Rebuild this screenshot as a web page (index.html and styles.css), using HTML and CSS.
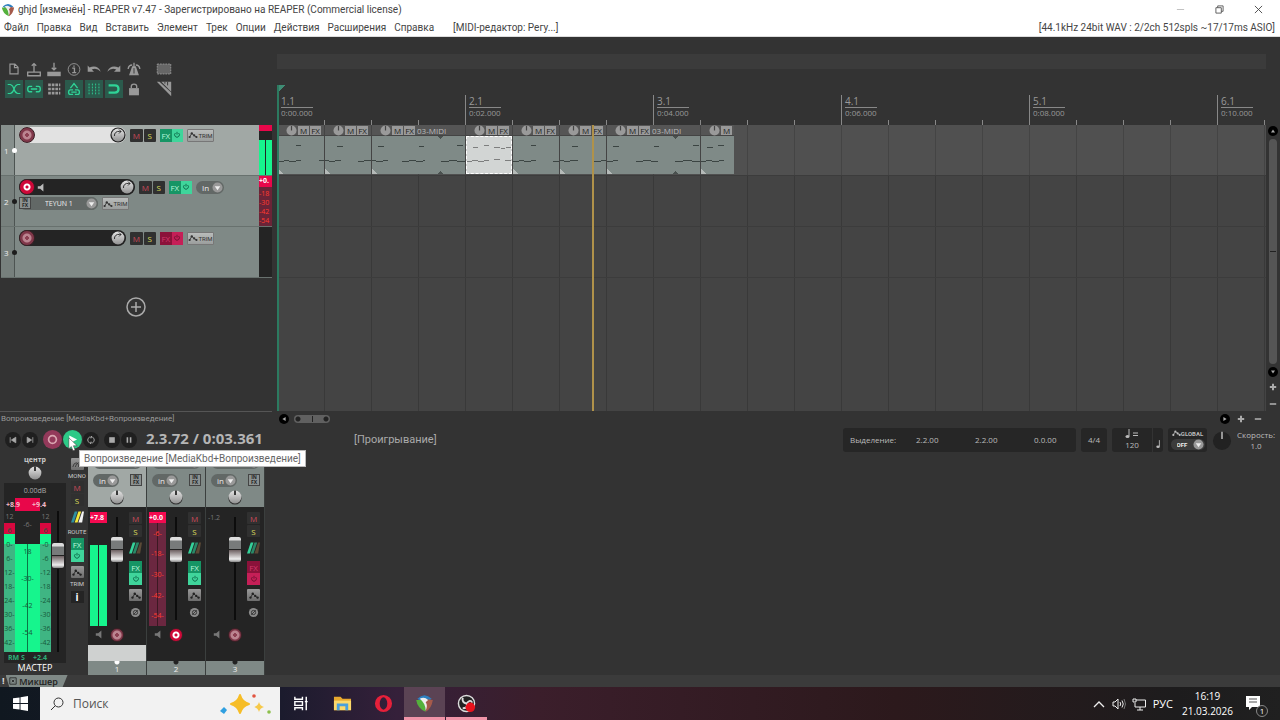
FILE: index.html
```
<!DOCTYPE html>
<html lang="ru">
<head>
  <meta charset="UTF-8">
  <meta name="viewport" content="width=device-width, initial-scale=1.0">
  <title>ghjd [изменён] - REAPER v7.47</title>
  <link rel="stylesheet" href="styles.css">
</head>
<body>
  <!-- Общие иконки -->
  <svg class="defs" aria-hidden="true">
    <symbol id="reaper" viewBox="0 0 16 16">
      <path d="M2 4 Q8 -2 14 4 L11 6 Q8 3 5 6Z" fill="#2d7fc0"/>
      <path d="M1 5 L6 5 Q9 8 9 15 Q2 12 1 5Z" fill="#54b13c"/>
      <path d="M7 4 L15 5 Q14 12 9 15 Q10 9 7 4Z" fill="#a55a4b"/>
      <path d="M4 4 Q8 2 11 5 L9 7 Q11 10 9 14 Q9 8 4 4Z" fill="#eee"/>
    </symbol>
    <symbol id="knob" viewBox="0 0 16 16">
      <circle cx="8" cy="8" r="7.6" fill="#222"/>
      <circle cx="8" cy="8" r="6.4" fill="url(#metal)"/>
      <path d="M4.500 9 A4 4 0 0 1 9.500 4.500 L11 4.500 M9 2.500L11 4.500L9 6.500" fill="none" stroke="#333"/>
    </symbol>
    <symbol id="pan" viewBox="0 0 16 16">
      <circle cx="8" cy="9" r="6.6" fill="#333"/>
      <circle cx="8" cy="8" r="6.4" fill="url(#metal)"/>
      <path d="M8 1.5V6" stroke="#111" stroke-width="1.6"/>
    </symbol>
    <linearGradient id="metal" x1="0" y1="0" x2="0" y2="1">
      <stop offset="0" stop-color="#e4e4e4"/><stop offset="1" stop-color="#929292"/>
    </linearGradient>
    <symbol id="power" viewBox="0 0 10 10">
      <path d="M3 2.5 A3 3 0 1 0 7 2.5 M5 1V4.5" fill="none" stroke="currentColor" stroke-width="1.2"/>
    </symbol>
    <symbol id="env" viewBox="0 0 12 10">
      <path d="M1.500 8 L4.500 3 L7.500 5.500 L10.500 8" fill="none" stroke="currentColor"/>
      <circle cx="1.800" cy="7.500" r="1.400" fill="currentColor"/><circle cx="4.500" cy="3" r="1.500" fill="currentColor"/>
      <circle cx="7.500" cy="5.500" r="1.400" fill="currentColor"/><circle cx="10.300" cy="7.500" r="1.400" fill="currentColor"/>
    </symbol>
    <symbol id="speaker" viewBox="0 0 10 10">
      <path d="M1 3.500H4L8 0V10L4 6.500H1Z" fill="currentColor"/>
    </symbol>
    <symbol id="route" viewBox="0 0 14 14">
      <path d="M4 1H7L3 13H0Z" fill="var(--a)"/><path d="M8 1H11L7 13H4Z" fill="var(--b)"/><path d="M12 1H14L12 13H8Z" fill="var(--c)"/>
    </symbol>
    <symbol id="phase" viewBox="0 0 12 12">
      <circle cx="6" cy="6" r="5" fill="#8c8c8c"/><circle cx="6" cy="6" r="2.300" fill="none" stroke="#333"/><path d="M3.500 8.500L8.500 3.500" stroke="#333"/>
    </symbol>
    <symbol id="take" viewBox="0 0 12 12">
      <circle cx="6" cy="6" r="5.500" fill="#9a9a9a"/><path d="M6 1V6" stroke="#444" stroke-width="1.300"/>
    </symbol>
  </svg>

  <header class="titlebar">
    <svg class="logo"><use href="#reaper"/></svg>
    <h1>ghjd [изменён] - REAPER v7.47 - Зарегистрировано на REAPER (Commercial license)</h1>
    <div class="win-buttons">
      <button aria-label="Свернуть"><svg viewBox="0 0 10 10"><path d="M1 5H9" stroke="#bbb"/></svg></button>
      <button aria-label="Окно"><svg viewBox="0 0 10 10"><path d="M1 3H7V9H1Z M3 3V1H9V7H7" fill="none" stroke="#555"/></svg></button>
      <button aria-label="Закрыть"><svg viewBox="0 0 10 10"><path d="M1 1L9 9M9 1L1 9" stroke="#444"/></svg></button>
    </div>
  </header>

  <nav class="menubar">
    <a href="#">Файл</a><a href="#">Правка</a><a href="#">Вид</a><a href="#">Вставить</a><a href="#">Элемент</a><a href="#">Трек</a><a href="#">Опции</a><a href="#">Действия</a><a href="#">Расширения</a><a href="#">Справка</a>
    <a href="#" class="editor-link">[MIDI-редактор: Регу...]</a>
    <span class="audio-info">[44.1kHz 24bit WAV : 2/2ch 512spls ~17/17ms ASIO]</span>
  </nav>

  <main class="workspace">
    <section class="side">
      <div class="toolbar">
        <button aria-label="Новый проект"><svg viewBox="0 0 20 20"><path d="M5.500 4.500H11L14.500 8V15.500H5.500Z M10.500 4.500V8.500H14.500" fill="none" stroke="currentColor" stroke-width="1.300"/></svg></button>
        <button aria-label="Открыть"><svg viewBox="0 0 20 20"><path d="M3 13.500H17V17.500H3Z M10 13V4M7.500 6.500L10 4L12.500 6.500" fill="none" stroke="currentColor" stroke-width="1.500"/></svg></button>
        <button aria-label="Сохранить"><svg viewBox="0 0 20 20"><path d="M2.500 13H17.500V18H2.500Z" fill="currentColor"/><path d="M10 3V11M7.500 8.500L10 11L12.500 8.500" fill="none" stroke="currentColor" stroke-width="1.500"/></svg></button>
        <button aria-label="Сведения"><svg viewBox="0 0 20 20"><circle cx="10" cy="10.500" r="6.500" fill="none" stroke="currentColor"/><path d="M8 9H10.500V14M8 14H12.500M10 6V7.500" fill="none" stroke="currentColor" stroke-width="1.500"/></svg></button>
        <button aria-label="Отменить"><svg viewBox="0 0 20 20"><path d="M3 6V13H10L7.500 10.500Q13 8 17.500 13Q14 5 5 8.300Z" fill="currentColor"/></svg></button>
        <button aria-label="Повторить"><svg viewBox="0 0 20 20"><path d="M17 6V13H10L12.500 10.500Q7 8 2.500 13Q6 5 15 8.300Z" fill="currentColor"/></svg></button>
        <button aria-label="Метроном"><svg viewBox="0 0 20 20"><path d="M8 7H12L15.500 17H4.500Z" fill="currentColor"/><path d="M10 3V14M3.500 10Q4 5.500 8 5.500M16.500 10Q16 5.500 12 5.500" fill="none" stroke="currentColor" stroke-width="1.500"/><path d="M10 9V15" stroke="#333"/></svg></button>
        <button class="apart" aria-label="Выделение"><svg viewBox="0 0 20 20"><path d="M2.500 4.500H17.500V15.500H2.500Z" fill="#666" stroke="currentColor" stroke-dasharray="2 1"/></svg></button>
        <button class="on" aria-label="Кроссфейд"><svg viewBox="0 0 20 20"><path d="M3 5H6Q9 6 10 10T14 15H17M17 5H14Q11 6 10 10T6 15H3" fill="none" stroke="currentColor" stroke-width="1.300"/></svg></button>
        <button class="on" aria-label="Группы"><svg viewBox="0 0 20 20"><path d="M8 7H5Q3 7 3 10T5 13H8M12 7H15Q17 7 17 10T15 13H12M6.500 10H13.500" fill="none" stroke="currentColor" stroke-width="1.500"/></svg></button>
        <button aria-label="Пульсация"><svg viewBox="0 0 20 20"><path d="M3.500 5.500H17M3.500 10H17M3.500 14.500H17" stroke="currentColor" stroke-width="3" stroke-dasharray="3 1"/></svg></button>
        <button class="on" aria-label="Огибающие"><svg viewBox="0 0 20 20"><path d="M6 9L10 4L14 9M9 11H6Q4 11 4 13.500T6 16H9M11 11H14Q16 11 16 13.500T14 16H11M7 13.500H13" fill="none" stroke="currentColor" stroke-width="1.500"/></svg></button>
        <button class="on" aria-label="Сетка"><svg viewBox="0 0 20 20"><path d="M4.500 4V16M8.200 4V16M11.800 4V16M15.500 4V16" stroke="currentColor" stroke-dasharray="2 1.300"/></svg></button>
        <button class="on" aria-label="Привязка"><svg viewBox="0 0 20 20"><path d="M4 6H11Q15 6 15 10T11 14H4" fill="none" stroke="currentColor" stroke-width="2.500"/></svg></button>
        <button aria-label="Блокировка"><svg viewBox="0 0 20 20"><path d="M4.500 9H15.500V17H4.500Z" fill="currentColor"/><path d="M7 9V7Q7 4.500 10 4.500T13 7V9" fill="none" stroke="currentColor" stroke-width="1.500"/></svg></button>
        <button class="apart" aria-label="Линейка"><svg viewBox="0 0 20 20"><path d="M7 2H18V13Z" fill="currentColor"/><path d="M11 2V4M14 2V6" stroke="#333"/><path d="M2 2H5L18 14V18Z" fill="currentColor"/></svg></button>
      </div>

      <div class="tracks">
        <article class="track selected">
          <div class="track-no">1</div>
          <div class="track-body">
            <div class="track-row">
              <div class="name-bar">
                <button class="rec" aria-label="Запись 1"></button>
                <input type="text" aria-label="Имя трека 1">
                <button class="dial" aria-label="Панорама 1"><svg><use href="#knob"/></svg></button>
              </div>
              <div class="pair"><button class="mute">M</button><button class="solo">S</button></div>
              <div class="pair fx"><button>FX</button><button aria-label="FX вкл"><svg><use href="#power"/></svg></button></div>
              <button class="trim"><svg><use href="#env"/></svg>TRIM</button>
            </div>
          </div>
          <div class="track-meter"><b></b><i></i><i></i></div>
        </article>
        <article class="track">
          <div class="track-no">2</div>
          <div class="track-body">
            <div class="track-row">
              <div class="name-bar wide">
                <button class="rec armed" aria-label="Запись 2"></button>
                <svg class="speaker"><use href="#speaker"/></svg>
                <input type="text" aria-label="Имя трека 2">
                <button class="dial" aria-label="Панорама 2"><svg><use href="#knob"/></svg></button>
              </div>
              <div class="pair"><button class="mute">M</button><button class="solo">S</button></div>
              <div class="pair fx"><button>FX</button><button aria-label="FX вкл"><svg><use href="#power"/></svg></button></div>
              <select class="pick" aria-label="Вход 2"><option>In</option></select>
            </div>
            <div class="track-row second">
              <div class="input-row"><button class="infx">IN<br>FX</button><select class="pick device" aria-label="Устройство"><option>TEYUN 1</option></select></div>
              <button class="trim"><svg><use href="#env"/></svg>TRIM</button>
            </div>
          </div>
          <div class="track-meter hot"><b>+0.</b><span>-18</span><span>-30</span><span>-42</span><span>-54</span></div>
        </article>
        <article class="track">
          <div class="track-no">3</div>
          <div class="track-body">
            <div class="track-row">
              <div class="name-bar">
                <button class="rec" aria-label="Запись 3"></button>
                <input type="text" aria-label="Имя трека 3">
                <button class="dial" aria-label="Панорама 3"><svg><use href="#knob"/></svg></button>
              </div>
              <div class="pair"><button class="mute">M</button><button class="solo">S</button></div>
              <div class="pair fx off"><button>FX</button><button aria-label="FX выкл"><svg><use href="#power"/></svg></button></div>
              <button class="trim"><svg><use href="#env"/></svg>TRIM</button>
            </div>
          </div>
          <div class="track-meter"></div>
        </article>
      </div>
      <button class="add-track" aria-label="Добавить трек"><svg viewBox="0 0 20 20"><circle cx="10" cy="10" r="9" fill="none" stroke="#aaa" stroke-width="1.500"/><path d="M10 5V15M5 10H15" stroke="#aaa" stroke-width="1.500"/></svg></button>
    </section>

    <section class="timeline">
      <div class="region-band"></div>
      <div class="ruler">
        <div class="measure"><b>1.1</b><span>0:00.000</span></div>
        <div class="measure"><b>2.1</b><span>0:02.000</span></div>
        <div class="measure"><b>3.1</b><span>0:04.000</span></div>
        <div class="measure"><b>4.1</b><span>0:06.000</span></div>
        <div class="measure"><b>5.1</b><span>0:08.000</span></div>
        <div class="measure"><b>6.1</b><span>0:10.000</span></div>
      </div>
      <div class="arrange">
        <div class="lane first">
          <div class="clip"><div class="clip-head"><svg><use href="#take"/></svg><button>M</button><button>FX</button></div>
            <svg class="notes" viewBox="0 0 47 38"><path d="M0 26H4L6 25H11L13 26H17L19 25H23M42 25H47M18 9H24"/></svg></div>
          <div class="clip"><div class="clip-head"><svg><use href="#take"/></svg><button>M</button><button>FX</button></div>
            <svg class="notes" viewBox="0 0 47 38"><path d="M0 25H4L6 26H9L11 25H16M34 26H38L40 25H47M12 10H18"/></svg></div>
          <div class="clip double"><div class="clip-head"><svg><use href="#take"/></svg><button>M</button><button>FX</button><span>03-MIDI</span></div>
            <svg class="notes" viewBox="0 0 94 38"><path d="M0 25H4L6 26H9L11 25H16M30 26H36L38 25H44L46 26H50L52 25H54M70 26H76L78 25H86L88 26H94M6 10H12M47 10H53M86 9H92"/><path class="split" d="M66 0H72L69 3ZM66 38H72L69 35Z"/></svg></div>
          <div class="clip picked"><div class="clip-head"><svg><use href="#take"/></svg><button>M</button><button>FX</button></div>
            <svg class="notes" viewBox="0 0 47 38"><path d="M0 26H4L6 25H11L13 26H17L19 25H23M29 24H35M41 25H47M6 11H12M18 9H24M29 11H35L36 12H41M42 11H47"/></svg></div>
          <div class="clip"><div class="clip-head"><svg><use href="#take"/></svg><button>M</button><button>FX</button></div>
            <svg class="notes" viewBox="0 0 47 38"><path d="M0 26H4L6 25H11L13 26H17L19 25H23M41 26H47M18 9H24"/></svg></div>
          <div class="clip"><div class="clip-head"><svg><use href="#take"/></svg><button>M</button><button>FX</button></div>
            <svg class="notes" viewBox="0 0 47 38"><path d="M0 25H4L6 26H9L11 25H18M35 26H40L42 25H47M12 10H18"/></svg></div>
          <div class="clip double"><div class="clip-head"><svg><use href="#take"/></svg><button>M</button><button>FX</button><span>03-MIDI</span></div>
            <svg class="notes" viewBox="0 0 94 38"><path d="M0 26H4L6 25H11M29 26H35L37 25H44L46 26H52M69 26H75L77 25H86L88 26H94M6 10H12M47 10H53M87 9H93"/><path class="split" d="M66 0H72L69 3ZM66 38H72L69 35Z"/></svg></div>
          <div class="clip last"><div class="clip-head"><svg><use href="#take"/></svg><button>M</button></div>
            <svg class="notes" viewBox="0 0 34 38"><path d="M0 26H4L6 25H11L13 26H17L19 25H24M6 11H12M18 9H24"/></svg></div>
        </div>
        <div class="lane"></div>
        <div class="lane"></div>
        <div class="play-cursor"></div>
      </div>
      <div class="edit-cursor"></div>
    </section>

    <div class="vscroll">
      <button class="round" aria-label="Вверх"><svg viewBox="0 0 10 10"><path d="M5 3L7.500 7H2.500Z" fill="#aaa"/></svg></button>
      <div class="vthumb"></div>
      <button class="round" aria-label="Вниз"><svg viewBox="0 0 10 10"><path d="M5 7L7.500 3H2.500Z" fill="#aaa"/></svg></button>
      <button class="zoom" aria-label="Увеличить по вертикали"><svg viewBox="0 0 10 10"><path d="M5 1V9M1 5H9" stroke="#aaa" stroke-width="2.500"/></svg></button>
      <button class="zoom" aria-label="Уменьшить по вертикали"><svg viewBox="0 0 10 10"><path d="M1 5H9" stroke="#aaa" stroke-width="2"/></svg></button>
    </div>
  </main>

  <div class="status-row">
    <p class="status">Вопроизведение [MediaKbd+Вопроизведение]</p>
    <div class="hscroll">
      <button class="round" aria-label="Влево"><svg viewBox="0 0 10 10"><path d="M3 5L7 2.500V7.500Z" fill="#aaa"/></svg></button>
      <div class="hthumb"></div>
      <button class="round push" aria-label="Вправо"><svg viewBox="0 0 10 10"><path d="M7 5L3 2.500V7.500Z" fill="#aaa"/></svg></button>
      <button class="zoom" aria-label="Увеличить"><svg viewBox="0 0 10 10"><path d="M5 1V9M1 5H9" stroke="#aaa" stroke-width="2.500"/></svg></button>
      <button class="zoom" aria-label="Уменьшить"><svg viewBox="0 0 10 10"><path d="M1 5H9" stroke="#aaa" stroke-width="2"/></svg></button>
    </div>
  </div>

  <section class="transport">
    <div class="play-buttons">
      <button aria-label="В начало"><svg viewBox="0 0 10 10"><path d="M1.500 1.500V8.500M8.500 1.500V8.500L3 5Z" fill="#aaa" stroke="#aaa"/></svg></button>
      <button aria-label="В конец"><svg viewBox="0 0 10 10"><path d="M8.500 1.500V8.500M1.500 1.500V8.500L7 5Z" fill="#aaa" stroke="#aaa"/></svg></button>
      <button class="big record" aria-label="Запись"><svg viewBox="0 0 10 10"><circle cx="5" cy="5" r="3" fill="none" stroke="#d9a5b0" stroke-width="1.300"/></svg></button>
      <button class="big play" aria-label="Воспроизведение"><svg viewBox="0 0 10 10"><path d="M2.500 2L8.500 5L2.500 8Z" fill="#fff"/></svg></button>
      <button aria-label="Повтор"><svg viewBox="0 0 10 10"><path d="M3 8.500A4 4 0 0 1 3 1.500H6M7 1.500A4 4 0 0 1 7 8.500H4M5 0L6.500 1.500L5 3M5 7L3.500 8.500L5 10" fill="none" stroke="#aaa" stroke-width="1.200"/></svg></button>
      <button class="stop" aria-label="Стоп"><svg viewBox="0 0 10 10"><path d="M1.500 1.500H8.500V8.500H1.500Z" fill="#aaa"/></svg></button>
      <button aria-label="Пауза"><svg viewBox="0 0 10 10"><path d="M3 1.500V8.500M7 1.500V8.500" stroke="#aaa" stroke-width="2"/></svg></button>
    </div>
    <output class="time">2.3.72 / 0:03.361</output>
    <span class="state">[Проигрывание]</span>
    <div class="fields">
      <div class="box selection"><span>Выделение:</span><span>2.2.00</span><span>2.2.00</span><span>0.0.00</span></div>
      <button class="box signature">4/4</button>
      <div class="box tempo"><span><svg viewBox="0 0 16 10"><path d="M5 0V7" stroke="#bbb"/><ellipse cx="3.500" cy="7.500" rx="2" ry="1.500" fill="#bbb"/><path d="M9 4H14M9 6.500H14" stroke="#bbb"/></svg>120</span><i><svg viewBox="0 0 8 10"><path d="M5 0V7" stroke="#bbb"/><ellipse cx="3.500" cy="7.500" rx="2" ry="1.500" fill="#bbb"/></svg></i></div>
      <div class="box global"><span><svg><use href="#env"/></svg>GLOBAL</span><select class="pick" aria-label="Автоматизация"><option>OFF</option></select></div>
      <button class="rate" aria-label="Регулятор скорости"><svg viewBox="0 0 22 22"><circle cx="11" cy="12" r="10" fill="#222"/><path d="M11 2V10" stroke="#ccc" stroke-width="1.500"/></svg></button>
      <div class="speed">Скорость:<br>1.0</div>
    </div>
    <div class="tooltip" role="tooltip">Вопроизведение [MediaKbd+Вопроизведение]</div>
    <svg class="pointer" viewBox="0 0 12 18"><path d="M1 1V14L4 11.500L6 16.500L8.500 15.500L6.500 10.500H11Z" fill="#fff" stroke="#333" stroke-width=".600"/></svg>
  </section>

  <section class="mixer">
    <div class="master">
      <span class="center-label">центр</span>
      <button class="dial" aria-label="Панорама мастера"><svg><use href="#pan"/></svg></button>
      <div class="master-panel">
        <div class="db">0.00dB</div>
        <div class="peaks"><b>+8.9</b><b>+9.4</b></div>
        <div class="master-main">
          <div class="scale"><span>12</span><span>6</span><span>0-</span><span>6-</span><span>12-</span><span>18-</span><span>24-</span><span>30-</span><span>36-</span><span>42-</span></div>
          <div class="inner"><span>-6-</span><span>18</span><span>-30-</span><span>-42</span><span>-54</span></div>
          <div class="scale"><span>12</span><span>6</span><span>-0</span><span>-6</span><span>-12</span><span>-18</span><span>-24</span><span>-30</span><span>-36</span><span>-42</span></div>
          <input type="range" class="fader tall" value="73" aria-label="Громкость мастера">
        </div>
        <div class="rms"><span>RM S</span><span>+2.4</span></div>
      </div>
      <div class="master-name">МАСТЕР</div>
    </div>

    <div class="master-side">
      <button class="gray" aria-label="Моно"><svg viewBox="0 0 12 10"><path d="M1 8Q2 3 5 3T8 8M4 8Q5 3 8 3T11 8" fill="none" stroke="#333"/></svg></button><small>MONO</small>
      <button class="mute">M</button><button class="solo">S</button>
      <button class="route colored" aria-label="Маршруты"><svg><use href="#route"/></svg></button><small>ROUTE</small>
      <div class="stack fx"><button>FX</button><button aria-label="FX мастера"><svg><use href="#power"/></svg></button></div>
      <button class="gray env" aria-label="Огибающие мастера"><svg><use href="#env"/></svg></button><small>TRIM</small>
      <button class="info">i</button>
    </div>

    <article class="channel selected">
      <div class="channel-top">
        <select class="pick source" aria-label="Источник канала 1"><option>TEYUN 1</option></select>
        <div class="channel-in"><select class="pick" aria-label="Вход канала 1"><option>in</option></select><button class="infx">IN<br>FX</button></div>
        <button class="dial" aria-label="Панорама канала 1"><svg><use href="#pan"/></svg></button>
      </div>
      <div class="channel-main">
        <div class="meter-col"><b class="peak">+7.8</b><div class="bars"><i></i><i></i></div></div>
        <input type="range" class="fader" value="75" aria-label="Громкость 1">
        <div class="channel-buttons">
          <button class="mute">M</button><button class="solo">S</button>
          <button class="route" aria-label="Маршрут 1"><svg><use href="#route"/></svg></button>
          <div class="stack fx"><button>FX</button><button aria-label="FX канала 1"><svg><use href="#power"/></svg></button></div>
          <button class="gray env" aria-label="Огибающая 1"><svg><use href="#env"/></svg></button>
          <button class="phase" aria-label="Фаза 1"><svg><use href="#phase"/></svg></button>
        </div>
      </div>
      <div class="channel-rec"><svg class="speaker"><use href="#speaker"/></svg><button class="rec" aria-label="Запись канала 1"></button></div>
      <div class="channel-name"></div>
      <div class="channel-no">1</div>
    </article>

    <article class="channel">
      <div class="channel-top">
        <select class="pick source" aria-label="Источник канала 2"><option>TEYUN 1</option></select>
        <div class="channel-in"><select class="pick" aria-label="Вход канала 2"><option>in</option></select><button class="infx">IN<br>FX</button></div>
        <button class="dial" aria-label="Панорама канала 2"><svg><use href="#pan"/></svg></button>
      </div>
      <div class="channel-main">
        <div class="meter-col"><b class="peak">+0.0</b><div class="hot-scale"><span>-6-</span><span>-18-</span><span>-30-</span><span>-42-</span><span>-54-</span></div></div>
        <input type="range" class="fader" value="75" aria-label="Громкость 2">
        <div class="channel-buttons">
          <button class="mute">M</button><button class="solo">S</button>
          <button class="route" aria-label="Маршрут 2"><svg><use href="#route"/></svg></button>
          <div class="stack fx"><button>FX</button><button aria-label="FX канала 2"><svg><use href="#power"/></svg></button></div>
          <button class="gray env" aria-label="Огибающая 2"><svg><use href="#env"/></svg></button>
          <button class="phase" aria-label="Фаза 2"><svg><use href="#phase"/></svg></button>
        </div>
      </div>
      <div class="channel-rec"><svg class="speaker"><use href="#speaker"/></svg><button class="rec armed" aria-label="Запись канала 2"></button></div>
      <div class="channel-name"></div>
      <div class="channel-no">2</div>
    </article>

    <article class="channel">
      <div class="channel-top">
        <select class="pick source" aria-label="Источник канала 3"><option>TEYUN 1</option></select>
        <div class="channel-in"><select class="pick" aria-label="Вход канала 3"><option>in</option></select><button class="infx">IN<br>FX</button></div>
        <button class="dial" aria-label="Панорама канала 3"><svg><use href="#pan"/></svg></button>
      </div>
      <div class="channel-main">
        <div class="meter-col"><b class="peak quiet">-1.2</b></div>
        <input type="range" class="fader" value="75" aria-label="Громкость 3">
        <div class="channel-buttons">
          <button class="mute">M</button><button class="solo">S</button>
          <button class="route" aria-label="Маршрут 3"><svg><use href="#route"/></svg></button>
          <div class="stack fx off"><button>FX</button><button aria-label="FX канала 3"><svg><use href="#power"/></svg></button></div>
          <button class="gray env" aria-label="Огибающая 3"><svg><use href="#env"/></svg></button>
          <button class="phase" aria-label="Фаза 3"><svg><use href="#phase"/></svg></button>
        </div>
      </div>
      <div class="channel-rec"><svg class="speaker"><use href="#speaker"/></svg><button class="rec" aria-label="Запись канала 3"></button></div>
      <div class="channel-name"></div>
      <div class="channel-no">3</div>
    </article>
  </section>

  <div class="docker"><b>!</b><button><svg viewBox="0 0 10 10"><path d="M1 1H9V9H1Z M3.500 3.500L6.500 6.500M6.500 3.500L3.500 6.500" fill="none" stroke="#222"/></svg>Микшер</button></div>

  <footer class="taskbar">
    <button class="start" aria-label="Пуск"><svg viewBox="0 0 16 16"><path d="M0 2.500L7 1.500V7.500H0ZM8 1.300L16 0V7.500H8ZM0 8.500H7V14.500L0 13.500ZM8 8.500H16V16L8 14.700Z" fill="#fff"/></svg></button>
    <div class="search">
      <svg class="lens" viewBox="0 0 14 14"><circle cx="8.500" cy="5.500" r="4.500" fill="none" stroke="#333"/><path d="M5.300 8.700L1 13" stroke="#333"/></svg>
      <input type="text" placeholder="Поиск" aria-label="Поиск">
      <svg class="stars" viewBox="0 0 52 22">
        <path d="M20 2Q22 9 29 11Q22 13 20 20Q18 13 11 11Q18 9 20 2Z" fill="#f6bd27" stroke="#f6bd27" stroke-width="2" stroke-linejoin="round"/>
        <path d="M39 9Q40 13 44 14Q40 15 39 19Q38 15 34 14Q38 13 39 9Z" fill="#f6c94a"/>
        <path d="M4 14L7 17L4 21L0 18Z" fill="#2f9fe0"/><circle cx="34" cy="3" r="1.800" fill="#e25541"/><circle cx="49" cy="19" r="1.800" fill="#8cbf4b"/>
      </svg>
    </div>
    <button class="app" aria-label="Представление задач"><svg viewBox="0 0 20 20"><path d="M3 3V5.500H11V3M3 17V14.500H11V17M3 8H11V12H3ZM15 3V17M13.500 8H16.500" fill="none" stroke="#fff" stroke-width="1.500"/></svg></button>
    <button class="app" aria-label="Проводник"><svg viewBox="0 0 20 20"><path d="M1 3H8L10 5H19V17H1Z" fill="#e8a92e"/><path d="M1 7H19V17H1Z" fill="#fcd96b"/><path d="M4 17V10H16V17H13V13H7V17Z" fill="#4aa0dc"/></svg></button>
    <button class="app" aria-label="Opera"><svg viewBox="0 0 20 20"><path fill-rule="evenodd" d="M10 1A9 9 0 1 0 10 19A9 9 0 1 0 10 1ZM10 3.500A4 6.500 0 1 1 10 16.500A4 6.500 0 1 1 10 3.500Z" fill="#e6203a"/></svg></button>
    <button class="app active" aria-label="REAPER"><svg><use href="#reaper"/></svg></button>
    <button class="app running" aria-label="OBS"><svg viewBox="0 0 20 20"><circle cx="10" cy="10" r="8.500" fill="#222" stroke="#ddd" stroke-width="1.500"/><path d="M6 4Q5 9 10 10Q14 5 16 9M10 10Q12 15 6 15" fill="none" stroke="#ddd" stroke-width="2"/><circle cx="14" cy="14" r="5" fill="#e8121c"/></svg></button>
    <div class="tray">
      <button aria-label="Скрытые значки"><svg viewBox="0 0 14 14"><path d="M2 10L7 5L12 10" fill="none" stroke="#eee" stroke-width="1.300"/></svg></button>
      <button aria-label="Звук"><svg viewBox="0 0 14 14"><path d="M1 5H3L6 2V12L3 9H1Z" fill="none" stroke="#eee"/><path d="M8 5Q9.500 7 8 9M10 3.500Q12.500 7 10 10.500" fill="none" stroke="#eee"/><path d="M12 2Q15 7 12 12" fill="none" stroke="#777"/></svg></button>
      <button aria-label="Сеть"><svg viewBox="0 0 14 14"><path d="M4 3H13.500V10H3V6M8 10V13M5 13H11M1 2H4V5H1Z" fill="none" stroke="#eee"/></svg></button>
      <button class="lang">РУС</button>
      <time>16:19<br>21.03.2026</time>
      <button class="notice" aria-label="Уведомления: 1"><svg viewBox="0 0 20 20"><path d="M1 2H15V13H7L4 16V13H1Z" fill="#fff"/><path d="M4 5H12M4 8H12" stroke="#555"/></svg><span>1</span></button>
    </div>
  </footer>
</body>
</html>
```

FILE: styles.css
```
* {
  box-sizing: border-box;
}
body {
  margin: 0;
  min-height: 100vh;
  display: flex;
  flex-direction: column;
  background: #333;
  color: #aaa;
  font-family: "Open Sans", "Noto Sans", sans-serif;
  font-size: 10px;
  overflow: hidden;
}
button, input, select {
  font: inherit;
  color: inherit;
  border: 0;
  padding: 0;
  margin: 0;
  background: none;
  min-width: 0;
}
button {
  display: flex;
  align-items: center;
  justify-content: center;
  flex: none;
}
svg {
  display: block;
  flex: none;
}
.defs {
  position: absolute;
  width: 0;
  height: 0;
}

/* Заголовок и меню */
.titlebar, .menubar, .status, .state, .tooltip {
  font-family: Roboto, "Open Sans", sans-serif;
}
.titlebar {
  display: flex;
  align-items: center;
  height: 19px;
  background: #fff;
  color: #444;
  padding: 0 2px 0 1px;
}
.titlebar h1 {
  margin: 0 0 0 3px;
  font-size: 10px;
  font-weight: normal;
}
.logo {
  width: 14px;
  height: 14px;
}
.win-buttons {
  display: flex;
  margin-left: auto;
}
.win-buttons button {
  width: 39px;
  height: 19px;
}
.win-buttons svg {
  width: 9px;
  height: 9px;
}
.menubar {
  display: flex;
  align-items: center;
  height: 18px;
  background: #fff;
  border-bottom: 1px solid #ddd;
  padding: 0 5px 0 4px;
  gap: 8px;
}
.menubar a {
  color: #444;
  text-decoration: none;
}
.menubar .editor-link {
  margin-left: 11px;
}
.audio-info {
  margin-left: auto;
  color: #444;
}

/* Рабочая область */
.workspace {
  flex: 1;
  display: flex;
}
.side {
  width: 277px;
  flex: none;
  padding-top: 22px;
}
.toolbar {
  display: grid;
  grid-template-columns: repeat(7, 20px) 40px;
  grid-auto-rows: 20px;
  padding-left: 4px;
  color: #999;
}
.toolbar svg {
  width: 18px;
  height: 18px;
}
.toolbar .on {
  background: #2b5a4c;
  color: #2fd497;
  margin: 1px;
}
.tracks {
  margin-top: 26px;
  padding-left: 1px;
  width: 272px;
}
.track {
  display: flex;
  height: 51px;
  background: #7f8986;
  border-bottom: 1px solid #68716e;
}
.track.selected {
  background: #a1a8a5;
}
.track-no {
  position: relative;
  width: 14px;
  padding-left: 3px;
  border-right: 1px solid #4d5452;
  background: #77807d;
  color: #eee;
  font-size: 8px;
  line-height: 51px;
}
.track-no::after {
  content: "";
  position: absolute;
  right: -3px;
  top: 23px;
  width: 5px;
  height: 5px;
  border-radius: 50%;
  background: #1c1c1c;
}
.selected .track-no {
  background: #87908d;
}
.selected .track-no::after {
  background: #fff;
}
.track-body {
  flex: 1;
  padding: 3px 0 0 4px;
}
.selected .track-body {
  padding-top: 2px;
}
.track-row {
  display: flex;
  align-items: center;
  gap: 4px;
}
.track-row.second {
  margin-top: 2px;
}
.name-bar {
  display: flex;
  align-items: center;
  width: 107px;
  height: 16px;
  border-radius: 8px;
  background: #242424;
}
.name-bar.wide {
  width: 116px;
}
.name-bar input {
  flex: 1;
  height: 16px;
  font-size: 9px;
}
.selected .name-bar {
  background: #e2e2e2;
}
.speaker {
  width: 8px;
  height: 9px;
  color: #bbb;
  margin-left: 2px;
}
.rec {
  width: 16px;
  height: 16px;
  border-radius: 50%;
  border: 1px solid #3a2025;
  background: radial-gradient(circle, #8c4052 0 2px, #bb8490 2px 4px, #80384a 5px);
}
.rec.armed {
  background: radial-gradient(circle, #d0093a 0 1px, #fff 2px 3px, #cf0838 4px);
}
.dial, .dial svg {
  width: 16px;
  height: 16px;
}
.pair {
  display: flex;
  width: 26px;
  height: 13px;
  gap: 1px;
  font-size: 8px;
}
.pair button {
  flex: 1;
}
.mute, .solo {
  background: #303030;
  font-size: 8px;
  border-radius: 1px;
}
.mute {
  color: #c94a5a;
}
.solo {
  color: #dcdc5a;
}
.fx {
  color: #b8f5db;
}
.fx button {
  background: #169565;
}
.fx button + button {
  background: #3fd59b;
  color: #0d6a48;
}
.fx.off button {
  background: #8b123a;
  color: #d23a6b;
}
.fx.off button + button {
  background: #c51f57;
  color: #701030;
}
.pair.fx {
  width: 23px;
  gap: 0;
}
.fx svg {
  width: 8px;
  height: 8px;
}
.trim {
  width: 27px;
  height: 13px;
  border: 1px solid #777;
  border-radius: 1px;
  background: linear-gradient(#b9bcbb, #9b9e9d);
  color: #333;
  font-family: Roboto, sans-serif;
  font-size: 6px;
}
.trim svg {
  width: 10px;
  height: 8px;
}
.pick {
  appearance: none;
  width: 28px;
  height: 13px;
  border-radius: 7px;
  padding: 0 12px 0 6px;
  color: #eee;
  font-size: 8px;
  background: #626866 url("data:image/svg+xml,%3Csvg xmlns='http://www.w3.org/2000/svg' viewBox='0 0 12 12'%3E%3Ccircle cx='6' cy='6' r='5.500' fill='%23999'/%3E%3Cpath d='M3 4.500H9L6 9Z' fill='%23eee'/%3E%3C/svg%3E") right 1px center / 11px no-repeat;
}
.input-row {
  display: flex;
  width: 79px;
  border-radius: 7px;
  background: #626866;
}
.pick.device {
  flex: 1;
  padding-left: 14px;
  font-size: 7px;
}
.infx {
  width: 12px;
  height: 12px;
  border: 1px solid #444;
  background: #8b9190;
  color: #222;
  font-size: 5px;
  line-height: 5px;
  font-weight: bold;
}
.track-meter {
  width: 13px;
  display: flex;
  flex-wrap: wrap;
  align-content: space-between;
  gap: 1px;
  background: #242424;
}
.track-meter b {
  width: 100%;
  height: 6px;
  background: #e8074a;
}
.track-meter i {
  width: 5px;
  height: 35px;
  background: #16f58d;
  flex: 1;
}
.track-meter.hot {
  display: block;
  background: #6b2437;
  color: #ff3b2f;
  font-size: 7px;
  line-height: 9px;
}
.track-meter span, .track-meter.hot b {
  display: block;
}
.track-meter.hot b {
  height: 13px;
  background: linear-gradient(#e8074a 11px, transparent 11px);
  color: #fff;
}
.add-track {
  margin: 19px 0 0 126px;
}
.add-track svg {
  width: 20px;
  height: 20px;
}

/* Линейка и треки */
.timeline {
  flex: 1;
  min-width: 0;
  display: flex;
  flex-direction: column;
  position: relative;
  padding-top: 17px;
  overflow: hidden;
}
.region-band {
  height: 15px;
  background: #3b3b3b;
}
.ruler {
  display: flex;
  height: 30px;
  margin-top: 26px;
  background: repeating-linear-gradient(90deg, #888 0 1px, transparent 1px 47px) bottom / 100% 5px no-repeat;
}
.measure {
  width: 188px;
  flex: none;
  border-left: 1px solid #888;
  padding-left: 3px;
  color: #999;
}
.measure b, .measure span {
  display: block;
  width: 32px;
  font-weight: normal;
  font-size: 10px;
  line-height: 12px;
}
.measure b {
  border-bottom: 1px solid #888;
}
.measure span {
  font-size: 8px;
  line-height: 10px;
}
.arrange {
  flex: 1;
  position: relative;
  background: repeating-linear-gradient(90deg, #393939 0 1px, transparent 1px 47px), #444;
}
.lane {
  height: 51px;
  border-bottom: 1px solid #3c3c3c;
}
.lane.first {
  display: flex;
  background: repeating-linear-gradient(90deg, #444 0 1px, transparent 1px 47px), #505050;
}
.clip {
  width: 47px;
  height: 49px;
  flex: none;
  border-left: 1px solid #444;
  background: linear-gradient(45deg, #b5bab8 4px, #7f8a87 4px);
}
.clip.double {
  width: 94px;
}
.clip.last {
  width: 34px;
}
.clip-head {
  display: flex;
  align-items: center;
  height: 11px;
  padding-left: 8px;
  gap: 1px;
  background: #555;
  color: #222;
  font-size: 8px;
  border-bottom: 1px solid #444;
}
.clip-head svg {
  width: 11px;
  height: 11px;
}
.clip-head button {
  width: 11px;
  height: 9px;
  background: #999;
}
.clip-head span {
  color: #bbb;
  margin-left: 1px;
}
.notes {
  width: 100%;
  height: 38px;
  fill: none;
  stroke: #3b4341;
  shape-rendering: crispEdges;
}
.notes .split {
  fill: #4a514f;
  stroke: none;
}
.clip.picked {
  background: #d2d5d4;
}
.picked .notes {
  border: 1px dashed #fff;
  stroke: #777;
}
.play-cursor {
  position: absolute;
  left: 315px;
  top: 0;
  bottom: 0;
  width: 2px;
  background: #b0924a;
}
.edit-cursor {
  position: absolute;
  left: 0;
  top: 48px;
  bottom: 0;
  width: 8px;
  border-left: 2px solid #2c7a60;
  background: linear-gradient(135deg, #3f8c74 5px, transparent 5px) top / 7px 7px no-repeat;
}
.vscroll {
  width: 14px;
  padding-top: 89px;
  display: flex;
  flex-direction: column;
  align-items: center;
  gap: 3px;
}
.round {
  width: 10px;
  height: 10px;
  border-radius: 50%;
  background: #000;
}
.round svg, .zoom svg {
  width: 8px;
  height: 8px;
}
.vthumb {
  flex: 1;
  width: 8px;
  border-radius: 4px;
  background: linear-gradient(#222, #222) center / 6px 1px no-repeat, #555;
}
.vscroll .zoom {
  height: 14px;
}

/* Строка состояния */
.status-row {
  display: flex;
  height: 16px;
}
.status {
  width: 272px;
  margin: 0 5px 0 0;
  padding-left: 1px;
  border-top: 1px solid #555;
  font-size: 8px;
  line-height: 14px;
  color: #999;
}
.hscroll {
  flex: 1;
  display: flex;
  align-items: center;
  gap: 5px;
  padding: 0 16px 0 2px;
}
.hthumb {
  width: 36px;
  height: 8px;
  border-radius: 4px;
  background: radial-gradient(circle at 4px 4px, #222 2px, transparent 3px), radial-gradient(circle at 32px 4px, #222 2px, transparent 3px), linear-gradient(#222, #222) center / 1px 6px no-repeat, #606060;
}
.push {
  margin-left: auto;
}
.hscroll .zoom {
  width: 12px;
}

/* Транспорт */
.transport {
  position: relative;
  display: flex;
  align-items: center;
  height: 25px;
}
.play-buttons {
  display: flex;
  align-items: center;
  gap: 1px;
  padding-left: 5px;
}
.play-buttons button {
  width: 16px;
  height: 16px;
  border-radius: 50%;
  background: #1f1f1f;
}
.play-buttons .big {
  width: 19px;
  height: 19px;
}
.play-buttons .record {
  background: #93395a;
  margin-left: 4px;
}
.play-buttons .play {
  background: #2dc987;
}
.play-buttons .stop {
  margin-left: 4px;
}
.play-buttons svg {
  width: 8px;
  height: 8px;
}
.play-buttons .big svg {
  width: 13px;
  height: 13px;
}
.time {
  margin-left: 9px;
  width: 208px;
  font-size: 15px;
  font-weight: bold;
  line-height: 23px;
  padding-bottom: 2px;
  color: #b5b5b5;
}
.state {
  font-size: 11px;
}
.fields {
  display: flex;
  align-items: center;
  margin-left: auto;
  gap: 5px;
  padding-right: 5px;
  font-size: 8px;
  color: #bbb;
}
.box {
  display: flex;
  align-items: center;
  height: 24px;
  border-radius: 3px;
  background: #262626;
}
.selection {
  width: 233px;
  padding-left: 7px;
}
.selection span {
  flex: none;
  width: 59px;
}
.selection span:first-child {
  width: 66px;
}
.selection span:last-child {
  width: auto;
}
.signature {
  width: 26px;
}
.tempo {
  width: 51px;
  line-height: 11px;
  text-align: center;
}
.tempo span {
  flex: 1;
}
.tempo span svg {
  width: 16px;
  height: 10px;
  margin: 0 auto;
}
.tempo i {
  width: 11px;
  height: 24px;
  padding: 12px 0 0 2px;
  border-left: 1px solid #333;
}
.tempo i svg {
  width: 7px;
  height: 9px;
}
.global {
  width: 39px;
  flex-direction: column;
  font-family: Roboto, sans-serif;
  font-size: 6px;
  font-weight: bold;
}
.global span {
  display: flex;
  align-items: center;
  height: 11px;
}
.global svg {
  width: 9px;
  height: 8px;
}
.global .pick {
  width: 34px;
  height: 11px;
  font-size: 6px;
  background-color: #3c3c3c;
}
.rate svg {
  width: 20px;
  height: 20px;
}
.speed {
  width: 38px;
  text-align: center;
  line-height: 11px;
}
.tooltip {
  position: absolute;
  left: 79px;
  top: 23px;
  height: 17px;
  padding: 0 4px;
  border: 1px solid #bbb;
  background: #fff;
  color: #666;
  font-size: 10px;
  line-height: 15px;
  white-space: nowrap;
  z-index: 2;
}
.pointer {
  position: absolute;
  left: 68px;
  top: 10px;
  width: 10px;
  height: 15px;
  z-index: 3;
}

/* Микшер */
.mixer {
  display: flex;
  height: 223px;
  padding: 3px 0 0 4px;
}
.master {
  width: 62px;
  display: flex;
  flex-direction: column;
  align-items: center;
}
.center-label {
  font-size: 7px;
  font-weight: bold;
  line-height: 10px;
  color: #ccc;
}
.master-panel {
  width: 100%;
  margin-top: 2px;
  background: #242424;
  font-size: 7px;
}
.db {
  text-align: center;
  line-height: 15px;
}
.peaks {
  display: flex;
  justify-content: space-between;
  width: 44px;
  height: 13px;
  padding: 0 2px;
  line-height: 13px;
  background: linear-gradient(#e8074a, #e8074a) 11px 0 / 25px 13px no-repeat;
  color: #f4b9c8;
}
.master-main {
  display: flex;
  height: 141px;
}
.scale {
  width: 11px;
  display: flex;
  flex-direction: column;
  text-align: center;
  color: #17593b;
  background: linear-gradient(#242424 12px, #d8083f 12px 23px, #16f58d 23px 33px, #3fb583 33px);
}
.scale span {
  height: 14px;
  line-height: 12px;
}
.scale span:first-child {
  color: #777;
}
.inner {
  width: 25px;
  display: flex;
  flex-direction: column;
  text-align: center;
  color: #17593b;
  background: linear-gradient(#242424 33px, transparent 33px), linear-gradient(90deg, #16f58d 12px, #0a7745 12px 13px, #16f58d 13px);
}
.inner span {
  height: 27px;
  line-height: 27px;
}
.inner span:first-child {
  color: #777;
}
.fader {
  appearance: none;
  writing-mode: vertical-lr;
  direction: rtl;
  width: 14px;
  height: 103px;
  background: linear-gradient(#0c0c0c, #0c0c0c) center / 2px 100% no-repeat;
}
.fader.tall {
  height: 141px;
}
.fader::-webkit-slider-thumb {
  appearance: none;
  width: 14px;
  height: 27px;
  border-radius: 3px;
  border: 1px solid #222;
  background: linear-gradient(#ddd 3px, #787b7b 4px 12px, #222 12px 13px, #6d6062 13px, #eee 22px, #888);
}
.rms {
  display: flex;
  gap: 8px;
  padding-left: 4px;
  line-height: 11px;
  font-weight: bold;
  color: #2fae79;
}
.master-name {
  font-size: 9px;
  line-height: 10px;
  color: #fff;
}
.master-side {
  width: 16px;
  margin: 3px 3px 0;
  display: flex;
  flex-direction: column;
  align-items: center;
  gap: 1px;
}
.master-side small {
  font-family: Roboto, sans-serif;
  font-size: 6px;
  line-height: 9px;
  color: #ccc;
}
.master-side button, .channel-buttons button {
  width: 13px;
  height: 12px;
}
.gray {
  background: linear-gradient(#999, #6d6d6d);
  border-radius: 1px;
  color: #222;
}
.gray svg {
  width: 10px;
  height: 9px;
}
.master-side .route, .channel-buttons .route {
  height: 19px;
  --a: #34d29a;
  --b: #2a8968;
  --c: #5b4a36;
}
.master-side .route.colored {
  --a: #2f8fa0;
  --b: #f4e83a;
  --c: #f4f4f4;
}
.route svg {
  width: 13px;
  height: 14px;
}
.stack {
  font-size: 8px;
  margin: 3px 0;
}
.master-side .stack {
  margin-top: 1px;
}
.info {
  background: #242424;
  color: #fff;
  font-weight: bold;
  margin-top: 2px;
}
.channel {
  width: 59px;
  display: flex;
  flex-direction: column;
  background: #242424;
  border-right: 1px solid #3b3f3e;
}
.channel-top {
  height: 52px;
  padding: 1px 4px 0 5px;
  background: #7f8986;
}
.selected .channel-top {
  background: #a1a8a5;
}
.channel-in {
  display: flex;
  justify-content: space-between;
  margin-top: 5px;
}
.channel-top .pick {
  width: 26px;
}
.channel-top .source {
  display: block;
  width: 100%;
  font-size: 7px;
}
.channel-top .dial {
  margin: 2px 0 0 16px;
}
.channel-main {
  display: flex;
  height: 119px;
  padding-top: 5px;
}
.meter-col {
  width: 19px;
  padding-left: 2px;
  display: flex;
  flex-direction: column;
}
.peak {
  height: 11px;
  background: #f50a50;
  color: #fff;
  font-size: 7px;
  line-height: 11px;
}
.peak.quiet {
  background: none;
  color: #777;
  font-weight: normal;
}
.bars {
  display: flex;
  gap: 1px;
  height: 81px;
  margin-top: 22px;
}
.bars i {
  flex: 1;
  background: #16f58d;
}
.hot-scale {
  flex: 1;
  display: flex;
  flex-direction: column;
  justify-content: space-around;
  background: linear-gradient(90deg, #6b2740 8px, #3c1822 8px 9px, #6b2740 9px);
  color: #ff3b2f;
  font-size: 7px;
  text-align: center;
}
.channel .fader {
  margin: 5px 5px 0 3px;
}
.channel-buttons {
  display: flex;
  flex-direction: column;
  align-items: center;
  gap: 1px;
}
.channel-buttons .phase {
  margin-top: 4px;
}
.phase svg {
  width: 11px;
  height: 11px;
}
.channel-rec {
  display: flex;
  align-items: center;
  gap: 7px;
  height: 17px;
  padding-left: 5px;
}
.channel-rec .rec {
  width: 14px;
  height: 14px;
}
.channel-rec .speaker {
  color: #777;
}
.channel-name {
  flex: 1;
  margin-top: 2px;
}
.selected .channel-name {
  background: #cfd1d0;
}
.channel-no {
  height: 14px;
  background: #7f8986 radial-gradient(circle at 29px 1px, #222 2px, transparent 3px);
  color: #eee;
  font-size: 8px;
  line-height: 15px;
  text-align: center;
}
.selected .channel-no {
  background: #7f8986 radial-gradient(circle at 29px 1px, #fff 2px, transparent 3px);
}
.docker {
  display: flex;
  height: 12px;
  background: #3b3b3b;
  padding-left: 2px;
  gap: 1px;
  font-size: 9px;
  line-height: 11px;
  color: #ddd;
}
.docker button {
  width: 62px;
  gap: 2px;
  padding-right: 6px;
  background: #7f8986;
  color: #222;
  font-weight: 600;
  clip-path: polygon(0 0, 100% 0, 92% 100%, 6% 100%);
}
.docker svg {
  width: 8px;
  height: 8px;
}

/* Панель задач */
.taskbar {
  display: flex;
  height: 33px;
  background: linear-gradient(90deg, #101820 0, #1b1b2d 22%, #35203a 31%, #3b1e2b 42%, #2c191c 70%, #1d1c1d 92%, #202020);
  color: #fff;
}
.start {
  width: 40px;
}
.start svg {
  width: 15px;
  height: 15px;
}
.search {
  width: 240px;
  margin-right: 1px;
  display: flex;
  align-items: center;
  padding: 0 8px 0 10px;
  background: #f2f2f2;
}
.lens {
  width: 14px;
  height: 14px;
}
.search input {
  flex: 1;
  margin-left: 9px;
  font-size: 12px;
}
.search input::placeholder {
  color: #555;
}
.stars {
  width: 52px;
  height: 22px;
}
.app {
  width: 41px;
  border-bottom: 3px solid transparent;
  padding-top: 3px;
}
.app svg {
  width: 19px;
  height: 19px;
}
.app.active {
  background: #5b4354;
  border-color: #f094a8;
}
.app.running {
  margin-left: 1px;
  border-color: #f094a8;
}
.tray {
  display: flex;
  align-items: center;
  gap: 6px;
  margin-left: auto;
  padding-right: 15px;
}
.tray svg {
  width: 14px;
  height: 14px;
}
.lang {
  font-size: 11px;
  margin: 0 3px 0 1px;
}
.tray time {
  font-size: 10px;
  line-height: 15px;
  text-align: center;
}
.notice {
  position: relative;
  margin-left: 6px;
}
.tray .notice svg {
  width: 20px;
  height: 20px;
}
.notice span {
  position: absolute;
  right: -3px;
  bottom: -3px;
  width: 12px;
  height: 12px;
  border: 1px solid #888;
  border-radius: 50%;
  background: #222;
  font-size: 8px;
  line-height: 10px;
}
```
